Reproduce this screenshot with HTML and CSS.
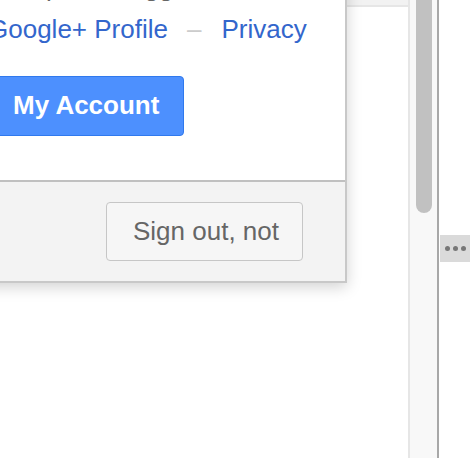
FILE: index.html
```html
<!DOCTYPE html>
<html>
<head>
<meta charset="utf-8">
<link rel="stylesheet" href="styles.css">
</head>
<body>
<div class="page">
  <div class="content">
    <div class="topband"></div>
    <div class="popup">
      <div class="popup-main">
        <div class="email">Template blogger</div>
        <div class="links">
          <a class="link" href="#">Google+ Profile</a><span class="sep">–</span><a class="link" href="#">Privacy</a>
        </div>
        <div class="actions">
          <a class="btn-primary" href="#">My Account</a>
        </div>
      </div>
      <div class="popup-footer">
        <a class="btn-default" href="#">Sign out, not</a>
      </div>
    </div>
  </div>
  <div class="scrollbar">
    <div class="thumb"></div>
  </div>
  <div class="side">
    <div class="more"><span class="dot"></span><span class="dot"></span><span class="dot"></span></div>
  </div>
</div>
</body>
</html>
```

FILE: styles.css
```css
html, body {
  margin: 0;
  padding: 0;
  background: #fff;
}
body {
  width: 470px;
  height: 458px;
  overflow: hidden;
  font-family: "Liberation Sans", Arial, sans-serif;
}
.page {
  display: flex;
  height: 458px;
}
.content {
  position: relative;
  flex: 1;
  background: #fff;
}
.topband {
  height: 5px;
  background: #f2f2f2;
  border-bottom: 2px solid #e6e6e6;
}
.popup {
  position: absolute;
  left: -53px;
  top: -42px;
  width: 400px;
  box-sizing: border-box;
  border: 2px solid #c8c8c8;
  background: #fff;
  box-shadow: 0 4px 14px rgba(0, 0, 0, 0.18);
  z-index: 2;
}
.popup-main {
  padding: 12px 0 44px 39px;
}
.email {
  font-size: 26px;
  line-height: 30px;
  color: #666;
  margin-left: 9px;
}
.links {
  margin-top: 12px;
  font-size: 26px;
  line-height: 30px;
  white-space: nowrap;
}
.link {
  color: #36c;
  text-decoration: none;
}
.sep {
  color: #ccc;
  margin: 0 20px 0 19px;
}
.actions {
  margin-top: 32px;
  display: flex;
}
.btn-primary {
  display: block;
  height: 58px;
  line-height: 56px;
  padding: 0 24px;
  font-size: 26px;
  font-weight: bold;
  color: #fff;
  text-decoration: none;
  background: #4d90fe;
  border: 1px solid #3079ed;
  border-radius: 4px;
}
.popup-footer {
  border-top: 2px solid #c0c0c0;
  background: #f3f3f3;
  padding: 20px 42px 20px 0;
  display: flex;
  justify-content: flex-end;
}
.btn-default {
  display: block;
  height: 57px;
  line-height: 57px;
  padding: 0 23px 0 26px;
  font-size: 26px;
  color: #666;
  text-decoration: none;
  background: #f6f6f6;
  border: 1px solid #c6c6c6;
  border-radius: 4px;
}
.scrollbar {
  width: 27px;
  border-left: 2px solid #e6e6e6;
  border-right: 2px solid #a8a8a8;
  background: #f8f8f8;
}
.thumb {
  margin: 0 5px 0 6px;
  height: 213px;
  background: #c1c1c1;
  border-radius: 0 0 8px 8px;
}
.side {
  width: 31px;
  background: #fff;
}
.more {
  margin-top: 235px;
  margin-left: 1px;
  height: 27px;
  background: #dadada;
  display: flex;
  align-items: center;
  gap: 3px;
  padding-left: 5px;
}
.dot {
  width: 5px;
  height: 5px;
  border-radius: 50%;
  background: #777;
}
```
